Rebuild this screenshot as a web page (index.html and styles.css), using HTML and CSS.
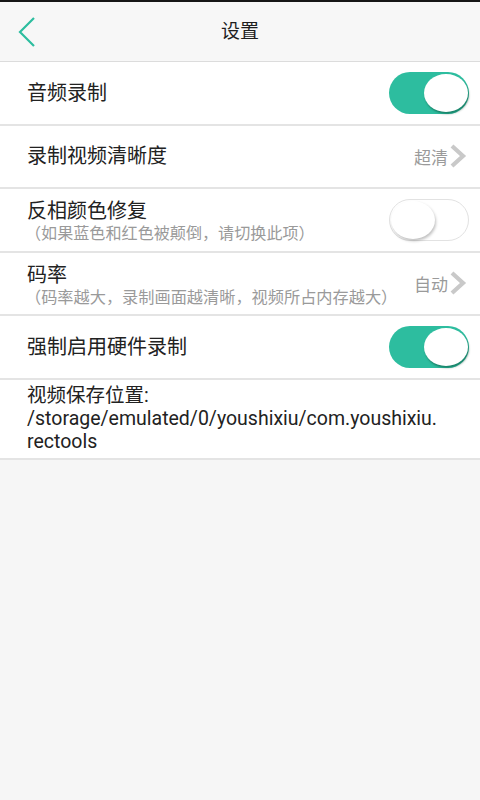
FILE: index.html
```html
<!DOCTYPE html>
<html lang="zh-CN">
<head>
<meta charset="utf-8">
<title>设置</title>
<link rel="stylesheet" href="styles.css">
</head>
<body>
<div class="statusbar"></div>
<header class="header">
  <svg class="back" width="20" height="32" viewBox="0 0 20 32"><polyline points="17,2 3,16 17,30" fill="none" stroke="#2dbd9f" stroke-width="2.2"/></svg>
  <div class="title">设置</div>
</header>
<main class="list">
  <div class="row">
    <div class="label"><div class="main">音频录制</div></div>
    <div class="toggle on"><div class="knob"></div></div>
  </div>
  <div class="row">
    <div class="label"><div class="main">录制视频清晰度</div></div>
    <div class="value">超清<svg class="chev" width="18" height="24" viewBox="0 0 18 24"><polyline points="3,2 14,12 3,22" fill="none" stroke="#c9c9c9" stroke-width="4.2"/></svg></div>
  </div>
  <div class="row">
    <div class="label two"><div class="main">反相颜色修复</div><div class="sub">（如果蓝色和红色被颠倒，请切换此项）</div></div>
    <div class="toggle off"><div class="knob"></div></div>
  </div>
  <div class="row">
    <div class="label two"><div class="main">码率</div><div class="sub sub2">（码率越大，录制画面越清晰，视频所占内存越大）</div></div>
    <div class="value">自动<svg class="chev" width="18" height="24" viewBox="0 0 18 24"><polyline points="3,2 14,12 3,22" fill="none" stroke="#c9c9c9" stroke-width="4.2"/></svg></div>
  </div>
  <div class="row">
    <div class="label"><div class="main">强制启用硬件录制</div></div>
    <div class="toggle on"><div class="knob"></div></div>
  </div>
  <div class="row tall">
    <div class="path">视频保存位置:<br>/storage/emulated/0/youshixiu/com.youshixiu.<br>rectools</div>
  </div>
</main>
</body>
</html>
```
FILE: styles.css
```css
html, body {
  margin: 0;
  padding: 0;
  background: #f6f6f6;
  font-family: "Roboto", "Noto Sans CJK SC", sans-serif;
  color: #222;
}
.statusbar {
  height: 2px;
  background: #161616;
}
.header {
  height: 60px;
  box-sizing: border-box;
  padding-bottom: 4px;
  background: #f7f7f7;
  border-bottom: 1px solid #dcdcdc;
  display: flex;
  align-items: center;
  justify-content: center;
  position: relative;
}
.back {
  position: absolute;
  left: 17px;
  top: 14px;
}
.title {
  font-size: 19px;
  color: #1e1e1e;
}
.list {
  display: flex;
  flex-direction: column;
}
.row {
  height: 63.5px;
  box-sizing: border-box;
  background: #fff;
  border-bottom: 2px solid #e4e4e4;
  display: flex;
  align-items: center;
  justify-content: space-between;
  padding: 0 11px 0 27px;
}
.row.tall {
  height: 80.5px;
}
.label {
  display: flex;
  flex-direction: column;
}
.label.two {
  padding-top: 5px;
}
.main {
  font-size: 20px;
  line-height: 24px;
  color: #222;
}
.sub {
  font-size: 16.1px;
  line-height: 22px;
  color: #9a9a9a;
  margin-left: -2px;
}
.sub2 {
  font-size: 16.2px;
}
.value {
  display: flex;
  align-items: center;
  font-size: 17px;
  color: #9a9a9a;
  margin-right: 2px;
  gap: 1px;
}
.toggle {
  width: 80px;
  height: 42px;
  border-radius: 21px;
  box-sizing: border-box;
  display: flex;
  align-items: center;
  padding: 0 1px;
}
.toggle.on {
  background: #2dbd9f;
  justify-content: flex-end;
}
.toggle.off {
  background: #fff;
  border: 1px solid #e2e2e2;
  justify-content: flex-start;
}
.knob {
  width: 44px;
  height: 38px;
  border-radius: 50%;
  background: #fff;
  box-shadow: 1px 2px 3px rgba(0, 0, 0, 0.25);
}
.toggle.on .knob {
  box-shadow: 1px 2px 2px rgba(0, 60, 40, 0.45);
}
.path {
  font-size: 19.5px;
  line-height: 23px;
  color: #222;
  white-space: nowrap;
}
```
